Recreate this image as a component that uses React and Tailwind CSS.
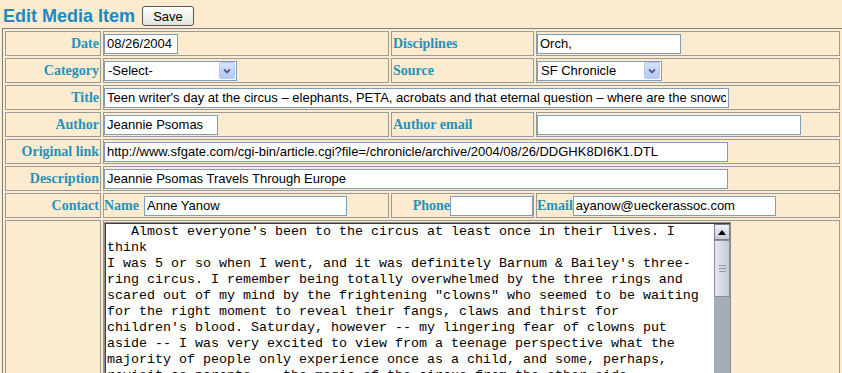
import React from 'react';

const label = "font-['Liberation_Serif',serif] font-bold text-[14px] leading-[16px] text-[#2592b9] whitespace-nowrap";
const cell = 'border border-[#9a9a9a] p-0 h-[25px] align-middle text-[13px] leading-[16px]';
const input =
  "block h-[20px] border border-[#7f9db9] bg-white px-[2px] text-[13px] text-black font-['Liberation_Sans',Arial,sans-serif] outline-none";

const Field = ({ w, value = '' }) => (
  <input readOnly defaultValue={value} className={input} style={{ width: w }} />
);

const Select = ({ w, value }) => (
  <div
    className="h-[20px] border border-[#7f9db9] bg-white flex items-center justify-between pl-[3px] pr-px text-[13px] font-['Liberation_Sans',Arial,sans-serif] text-black"
    style={{ width: w }}
  >
    <span>{value}</span>
    <span className="w-[16px] h-[17px] rounded-[2px] border border-[#b5c7f0] bg-gradient-to-b from-[#d6e2fd] to-[#b3c7f5] flex items-center justify-center">
      <svg width="8" height="6" viewBox="0 0 8 6">
        <path d="M1 1.5 L4 4.5 L7 1.5" fill="none" stroke="#4d6185" strokeWidth="1.8" />
      </svg>
    </span>
  </div>
);

const story = `   Almost everyone's been to the circus at least once in their lives. I
think
I was 5 or so when I went, and it was definitely Barnum & Bailey's three-
ring circus. I remember being totally overwhelmed by the three rings and
scared out of my mind by the frightening "clowns" who seemed to be waiting
for the right moment to reveal their fangs, claws and thirst for
children's blood. Saturday, however -- my lingering fear of clowns put
aside -- I was very excited to view from a teenage perspective what the
majority of people only experience once as a child, and some, perhaps,
revisit as parents -- the magic of the circus from the other side.`;

const TextBox = () => (
  <div className="flex w-[627px] h-[200px] mt-px border border-[#8c8c8c] shadow-[inset_1px_1px_0_#3f3f3f] bg-white">
    <div className="flex-1 pl-[2px] pt-px whitespace-pre font-['Liberation_Mono','Courier_New',monospace] text-[13.33px] leading-[16px] text-black overflow-hidden">
      {story}
    </div>
    <div className="w-[16px] mt-px flex flex-col bg-[#a7abb6]">
      <div className="h-[16px] border border-[#7c7f88] bg-gradient-to-b from-[#f0f1f5] to-[#c9cdd8] flex items-center justify-center">
        <svg width="8" height="5" viewBox="0 0 8 5">
          <path d="M0 5 L4 0 L8 5 Z" fill="#000" />
        </svg>
      </div>
      <div className="h-[57px] border border-[#8b8f9a] bg-gradient-to-r from-[#e6e8ee] to-[#c6cad5] flex flex-col items-center justify-center gap-[2px]">
        <div className="w-[7px] h-px bg-[#9498a4]" />
        <div className="w-[7px] h-px bg-[#9498a4]" />
        <div className="w-[7px] h-px bg-[#9498a4]" />
      </div>
    </div>
  </div>
);

export default function App() {
  return (
    <div className="w-[842px] h-[373px] overflow-hidden bg-[#fdebd0] font-['Liberation_Sans',Arial,sans-serif]">
      <div className="h-[28px] flex items-start gap-[7px] pl-[3px] pt-[6px]">
        <h1 className="text-[18px] leading-[20px] font-bold text-[#1b8ac3]">Edit Media Item</h1>
        <button className="w-[52px] h-[20px] rounded-[3px] border border-[#555] bg-gradient-to-b from-white to-[#e4e4de] text-[13px] text-black leading-none">
          Save
        </button>
      </div>
      <table className="ml-[2px] table-fixed border-separate border-spacing-[2px] border border-[#7f7f7f] w-[841px]">
        <colgroup>
          <col className="w-[96px]" />
          <col className="w-[286px]" />
          <col className="w-[143px]" />
          <col className="w-[304px]" />
        </colgroup>
        <tbody>
          <tr>
            <td className={`${cell} text-right pr-px`}><span className={label}>Date</span></td>
            <td className={cell}><Field w={74} value="08/26/2004" /></td>
            <td className={`${cell} pl-px`}><span className={label}>Disciplines</span></td>
            <td className={cell}><Field w={144} value="Orch," /></td>
          </tr>
          <tr>
            <td className={`${cell} text-right pr-px`}><span className={label}>Category</span></td>
            <td className={cell}><Select w={133} value="-Select-" /></td>
            <td className={`${cell} pl-px`}><span className={label}>Source</span></td>
            <td className={cell}><Select w={125} value="SF Chronicle" /></td>
          </tr>
          <tr>
            <td className={`${cell} text-right pr-px`}><span className={label}>Title</span></td>
            <td className={cell} colSpan={3}>
              <Field
                w={625}
                value="Teen writer's day at the circus – elephants, PETA, acrobats and that eternal question – where are the snowcones?"
              />
            </td>
          </tr>
          <tr>
            <td className={`${cell} text-right pr-px`}><span className={label}>Author</span></td>
            <td className={cell}><Field w={114} value="Jeannie Psomas" /></td>
            <td className={`${cell} pl-px`}><span className={label}>Author email</span></td>
            <td className={cell}><Field w={264} /></td>
          </tr>
          <tr>
            <td className={`${cell} text-right pr-px`}><span className={label}>Original link</span></td>
            <td className={cell} colSpan={3}>
              <Field w={624} value="http://www.sfgate.com/cgi-bin/article.cgi?file=/chronicle/archive/2004/08/26/DDGHK8DI6K1.DTL" />
            </td>
          </tr>
          <tr>
            <td className={`${cell} text-right pr-px`}><span className={label}>Description</span></td>
            <td className={cell} colSpan={3}>
              <Field w={624} value="Jeannie Psomas Travels Through Europe" />
            </td>
          </tr>
          <tr>
            <td className={`${cell} text-right pr-px`}><span className={label}>Contact</span></td>
            <td className={cell}>
              <div className="flex items-center gap-[5px]">
                <span className={label}>Name</span>
                <Field w={203} value="Anne Yanow" />
              </div>
            </td>
            <td className={cell}>
              <div className="flex items-center justify-end">
                <span className={label}>Phone</span>
                <Field w={83} />
              </div>
            </td>
            <td className={cell}>
              <div className="flex items-center">
                <span className={label}>Email</span>
                <Field w={203} value="ayanow@ueckerassoc.com" />
              </div>
            </td>
          </tr>
          <tr>
            <td className={`${cell} h-[210px] align-top`} />
            <td className={`${cell} align-top`} colSpan={3}>
              <TextBox />
            </td>
          </tr>
        </tbody>
      </table>
    </div>
  );
}
